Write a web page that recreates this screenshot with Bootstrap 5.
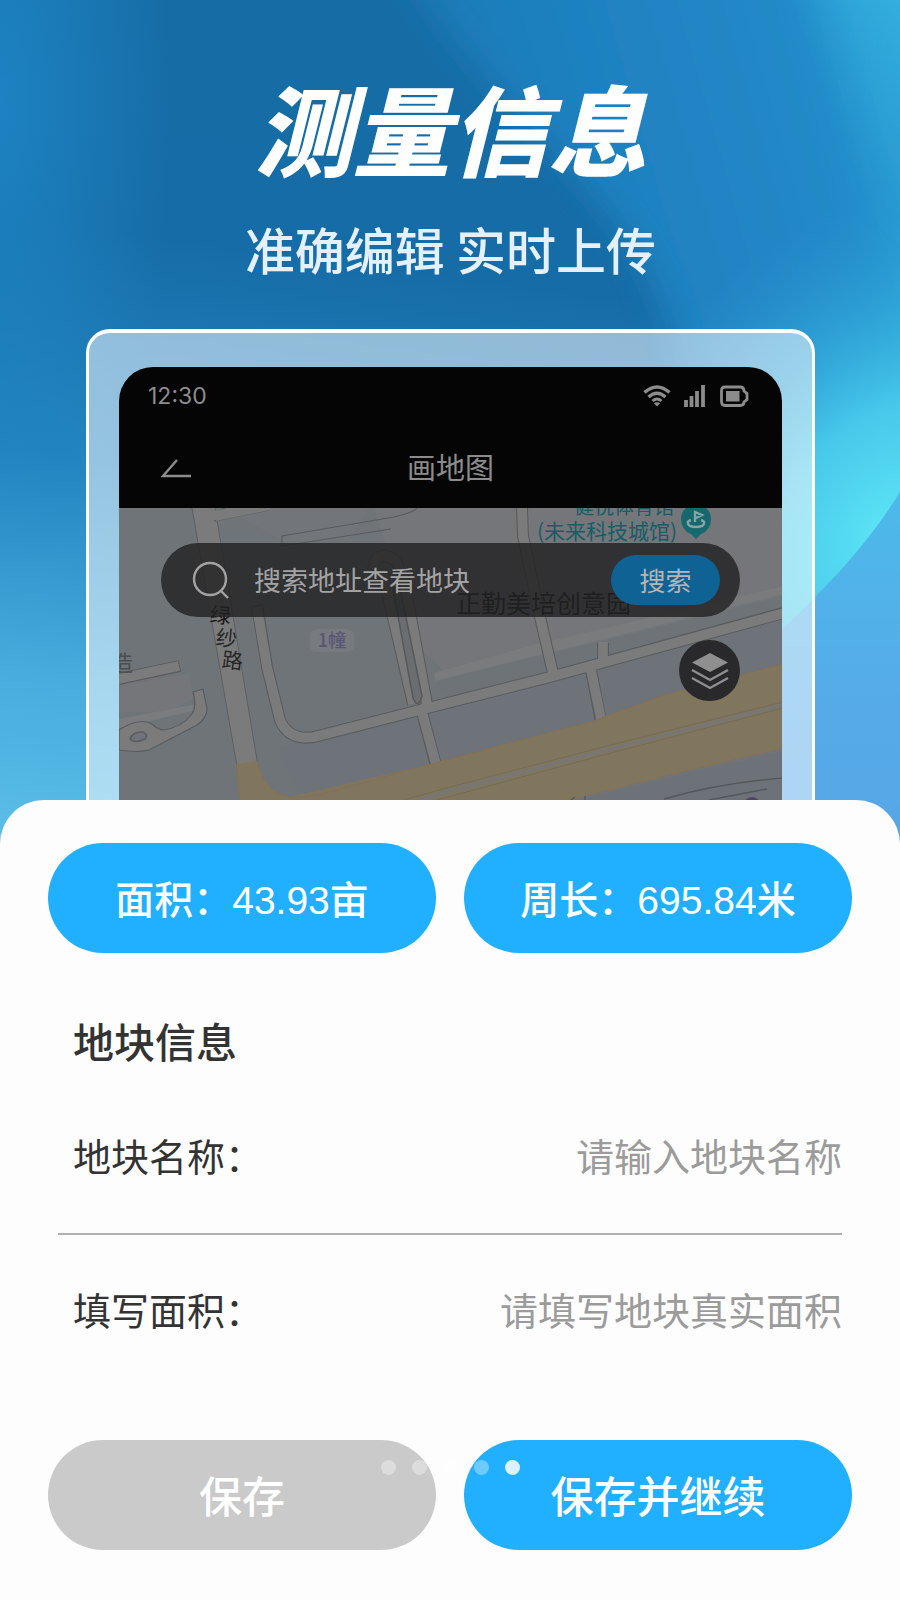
<!DOCTYPE html>
<html lang="zh-CN">
<head>
<meta charset="utf-8">
<meta name="viewport" content="width=device-width, initial-scale=1">
<title>测量信息</title>
<link href="https://cdn.jsdelivr.net/npm/bootstrap@5.3.0/dist/css/bootstrap.min.css" rel="stylesheet">
<style>
  body { font-family: "Liberation Sans", "Noto Sans CJK SC", sans-serif; background: #fdfdfd; color: #333; }
  .sky { top: 0; left: 0; width: 100%; height: 900px; z-index: 0; }
  .hero { z-index: 1; padding: 70px 85px 0 86px; }
  .hero-title { font-family: "Noto Sans CJK SC", sans-serif; font-size: 98px; line-height: 112px; font-weight: 900; font-style: italic; }
  .hero-sub { font-family: "Noto Sans CJK SC", sans-serif; font-size: 50px; line-height: 64px; font-weight: 500; color: #e4f1fd; margin-top: 34px; }
  .device-frame { margin-top: 49px; padding: 34px 30px 0; border: 3px solid #fff; border-top-width: 4px; border-bottom: 0; border-radius: 24px 24px 0 0; background: rgba(255,255,255,.52); }
  .device { border-radius: 34px 34px 0 0; background: #050505; color: #8c8c8c; }
  .status-bar { height: 58px; padding: 0 31px 0 29px; font-family: Inter, sans-serif; font-size: 23px; }
  .title-bar { height: 83px; padding: 5px 42px 0; font-size: 29px; line-height: 40px; }
  .back-btn { left: 42px; line-height: 1; color: inherit; }
  .map-area { min-height: 292px; padding: 35px 42px 0; background: #707478; }
  .map-art { top: 0; left: 0; }
  .map-art text { font-family: "Noto Sans CJK SC", sans-serif; }
  .search-bar { height: 74px; padding: 0 20px 0 31px; background: rgba(34,34,35,.82); }
  .search-bar input, .search-bar input::placeholder { color: #a3a3a3; opacity: 1; }
  .search-bar input { font-size: 27px; line-height: 40px; min-width: 0; margin-left: 24px; padding: 4px 0 0; outline: 0; }
  .search-btn { width: 109px; height: 50px; padding: 4px 0 0; font-size: 26px; line-height: 40px; background: #0e6294; color: #b5b5b5; }
  .layer-btn { width: 61px; height: 61px; margin-top: 23px; background: #29292b; }
  .sheet { z-index: 2; background: #fdfdfd; border-radius: 44px 44px 0 0; padding: 43px 48px 50px; }
  .pill { height: 110px; padding: 5px 0 0; font-size: 39px; line-height: 56px; font-weight: 500; color: #fff; background: #21b0ff; }
  .pill-action { font-size: 43px; }
  .pill-muted { background: #cacaca; }
  .sheet-form { padding: 0 10px; }
  .section-title { font-size: 41px; line-height: 60px; font-weight: 500; margin: 61px 15px 0; }
  .field-row { height: 156px; font-size: 38px; line-height: 56px; padding-left: 15px; }
  .field-row + .field-row { border-top: 2px solid #b0b0b0; }
  .field-row:first-of-type { height: 150px; margin-top: 9px; }
  .field-row input { min-width: 0; outline: 0; color: #333; }
  .field-row input::placeholder { color: #9b9b9b; opacity: 1; }
  .actions { margin-top: 51px; }
  .pager { top: 20px; left: 0; right: 0; pointer-events: none; }
  .pager i { width: 15px; height: 15px; background: rgba(255,255,255,.35); }
  .pager i.current { background: #ddf2ff; }
</style>
</head>
<body>
<div class="position-relative overflow-hidden min-vh-100 d-flex flex-column">

  <svg class="sky position-absolute" viewBox="0 0 900 900" preserveAspectRatio="none" aria-hidden="true">
    <defs>
      <linearGradient id="gBase" x1="450" y1="0" x2="330" y2="900" gradientUnits="userSpaceOnUse">
        <stop offset="0" stop-color="#166da5"/><stop offset=".3" stop-color="#166ca6"/><stop offset=".55" stop-color="#2284bf"/><stop offset=".8" stop-color="#48acde"/><stop offset="1" stop-color="#5cc0e8"/>
      </linearGradient>
      <radialGradient id="gLeft" cx="0" cy="0" r="1" gradientUnits="userSpaceOnUse" gradientTransform="translate(0 100) scale(170 480)">
        <stop offset="0" stop-color="#1e86c7" stop-opacity=".85"/><stop offset="1" stop-color="#1e86c7" stop-opacity="0"/>
      </radialGradient>
      <linearGradient id="gRight" x1="400" y1="300" x2="900" y2="160" gradientUnits="userSpaceOnUse">
        <stop offset="0" stop-color="#1a72af"/><stop offset=".35" stop-color="#1f7fbd"/><stop offset=".7" stop-color="#2085c5"/><stop offset=".88" stop-color="#218ac8"/><stop offset="1" stop-color="#2a9dd4"/>
      </linearGradient>
      <radialGradient id="gCyan" cx="0" cy="0" r="1" gradientUnits="userSpaceOnUse" gradientTransform="translate(885 530) rotate(-52) scale(400 290)">
        <stop offset="0" stop-color="#5ce4f5"/><stop offset=".35" stop-color="#4bd0ef" stop-opacity=".9"/><stop offset=".65" stop-color="#38b6e2" stop-opacity=".5"/><stop offset="1" stop-color="#2a9bd6" stop-opacity="0"/>
      </radialGradient>
      <linearGradient id="gCorner" x1="810" y1="60" x2="920" y2="20" gradientUnits="userSpaceOnUse">
        <stop offset="0" stop-color="#36b4e0" stop-opacity="0"/><stop offset="1" stop-color="#36b4e0" stop-opacity=".85"/>
      </linearGradient>
      <linearGradient id="gFade" x1="0" y1="0" x2="0" y2="1"><stop offset="0" stop-color="#fff"/><stop offset="1" stop-color="#000"/></linearGradient>
      <mask id="mCorner"><rect x="780" width="120" height="260" fill="url(#gFade)"/></mask>
      <linearGradient id="gLow" x1="0" y1="0" x2="0" y2="1">
        <stop offset="0" stop-color="#4cbaea"/><stop offset=".5" stop-color="#55abe8"/><stop offset="1" stop-color="#57a4e5"/>
      </linearGradient>
      <filter id="soft" x="-20%" y="-20%" width="140%" height="140%"><feGaussianBlur stdDeviation="16"/></filter>
    </defs>
    <rect width="900" height="900" fill="url(#gBase)"/>
    <rect width="200" height="640" fill="url(#gLeft)"/>
    <path d="M390 -60C450 60 560 150 610 215C650 265 665 310 680 366L720 640L980 640L980 -60Z" fill="url(#gRight)" filter="url(#soft)"/>
    <rect x="500" width="400" height="900" fill="url(#gCyan)"/>
    <rect x="780" width="120" height="260" fill="url(#gCorner)" mask="url(#mCorner)"/>
    <path d="M900 492C870 540 840 572 815 597C800 613 790 622 770 640L640 730L640 900L900 900Z" fill="url(#gLow)"/>
  </svg>

  <header class="hero position-relative text-center text-white">
    <h1 class="hero-title mb-0">测量信息</h1>
    <p class="hero-sub mb-0">准确编辑 实时上传</p>

    <div class="device-frame">
      <div class="device overflow-hidden">
        <div class="status-bar d-flex align-items-center justify-content-between">
          <span>12:30</span>
          <span class="d-flex align-items-center">
            <svg width="108" height="26" viewBox="0 0 108 26" fill="none" stroke="#8c8c8c" aria-hidden="true">
              <path d="M1.500 9.500Q14 -1.500 26.500 9.500" stroke-width="3.600"/>
              <path d="M5.500 14Q14 6.500 22.500 14" stroke-width="3.400"/>
              <path d="M9.500 18Q14 14 18.500 18" stroke-width="3"/>
              <path d="M14 23.500L10.800 20.300Q14 18 17.200 20.300Z" fill="#8c8c8c" stroke="none"/>
              <path d="M43 24V17M48.500 24V13M54 24V8M60 24V2" stroke-width="3.800"/>
              <path d="M82 4H97Q101 4 101 8L104 10.500V16.500L101 19Q101 22.500 97 22.500H82Q78.500 22.500 78.500 18.500V8Q78.500 4 82 4Z" stroke-width="2.800"/>
              <rect x="83" y="8" width="13.500" height="10.500" fill="#8c8c8c" stroke="none"/>
            </svg>
          </span>
        </div>
        <div class="title-bar position-relative d-flex align-items-center justify-content-center">
          <button type="button" class="back-btn btn p-0 border-0 position-absolute" aria-label="返回">
            <svg width="30" height="20" viewBox="0 0 30 20" fill="none" stroke="#8c8c8c" stroke-width="2.400"><path d="M16 1L2 17H30"/></svg>
          </button>
          <span>画地图</span>
        </div>

        <div class="map-area position-relative overflow-hidden">
          <svg class="map-art position-absolute w-100 h-100" viewBox="0 0 663 292" preserveAspectRatio="xMidYMin slice" role="img" aria-label="地图">
            <rect width="664" height="292" fill="#6f7478"/>
            <path d="M230 0H664V92L331 168L300 140L255 0Z" fill="#747679"/>
            <path d="M105 0H250L230 32L165 34Z" fill="#727579"/>
            <path d="M315 165L410 138L664 78V86L316 173Z" fill="#7a7b7d"/>
            <path d="M317 174L664 88V98L331 190Z" fill="#6e7378"/>
            <path d="M0 178L70 165L75 190L50 204H0Z" fill="#747679"/>
            <path d="M0 211L78 196V202L0 220Z" fill="#7a7c7d"/>
            <path d="M160 240L664 110V190L500 240L180 290Z" fill="#6e7279"/>
            <!-- trunk road -->
            <path d="M73 0L119 264H140L96 0Z" fill="#7b7b7b"/>
            <path d="M73 0L119 264M96 0L140 264" stroke="#5d6062" fill="none"/>
            <path d="M95 13L150 2M100 3L106 0" stroke="#5d6062" stroke-width="1.500" fill="none"/>
            <path d="M96 8L150 -3" stroke="#7a7b7b" stroke-width="10"/>
            <!-- streets: casing first, surface above -->
            <g fill="none" stroke-linejoin="round">
              <g stroke="#595c5e" stroke-width="12">
                <path d="M138 97L148 159L161 212Q170 233 195 229L285 206L431 169L664 105"/>
                <path d="M263 62L294 196M283 60L308 196L303 204L317 258"/>
                <path d="M254 62Q256 47 266 48Q277 49 280 60"/>
                <path d="M403 0L404 28L421 109L434 165M484 135V158M472 162L482 214"/>
                <path d="M0 171L61 158"/>
              </g>
              <g stroke="#7b7b7b" stroke-width="9.800">
                <path d="M138 99L148 159L161 212Q170 233 195 229L285 206L431 169L665 105"/>
                <path d="M263 62L294 196M283 60L308 196L303 204L318 260"/>
                <path d="M254 62Q256 47 266 48Q277 49 280 60"/>
                <path d="M403 -1L404 28L421 109L434 165M484 134V158M472 162L483 216"/>
                <path d="M-1 171L60 158"/>
              </g>
              <path d="M163 38V28L275 9Q294 5 298 0M163 38L272 21" stroke="#595c5e" stroke-width="1.200"/>
              <path d="M273 75L294 190Q299 202 303 188L280 75" fill="#6b6e70" stroke="#56595b" stroke-width="1.500"/>
              <path d="M0 222Q22 208 34 217Q40 222 44 222Q62 220 73 206Q78 198 74 184L84 181L88 201Q88 210 78 217L30 242Q18 245 0 242Z" fill="#7b7b7b" stroke="#595c5e" stroke-width="1.200"/>
              <path d="M11 231Q14 223 24 224Q30 227 26 231Q16 236 11 231Z" stroke="#595c5e" stroke-width="1.500" fill="#707478"/>
            </g>
            <!-- expressway -->
            <path d="M117 256L138 253Q145 284 170 289L312 256L474 213L545 187L664 156V240L538 270L450 292H121Z" fill="#80765d"/>
            <path d="M117 256L121 292M138 253Q145 284 170 289Q180 290 200 287L312 256L474 213L545 187L664 156M664 240L538 270L450 292" fill="none" stroke="#85705a"/>
            <path d="M300 292L331 283L488 242L664 197" fill="none" stroke="#797671" stroke-width="4"/>
            <path d="M285 292L331 279L488 238L664 194M318 292L488 246L664 200" fill="none" stroke="#756a56"/>
            <path d="M460 292L664 243V292Z" fill="#6d7278"/>
            <path d="M545 291Q600 275 664 270M590 292L648 281M452 292L456 289M466 288V292" fill="none" stroke="#55585b" stroke-width="1.400"/>
            <circle cx="633" cy="298" r="9" fill="#4b455f"/>
            <!-- labels -->
            <g fill="#252627" font-size="21">
              <text x="91" y="115" transform="rotate(6 102 107)" fill="#151515">绿</text>
              <text x="97" y="138" transform="rotate(6 108 130)">纱</text>
              <text x="103" y="160" transform="rotate(6 113 152)">路</text>
            </g>
            <text x="-8" y="163" font-size="22" fill="#4c4e50">造</text>
            <rect x="191" y="121" width="44" height="23" rx="6" fill="#777a7f"/>
            <text x="213" y="139" font-size="18" font-weight="500" text-anchor="middle" fill="#595575">1幢</text>
            <g fill="#165d66">
              <text x="455" y="6" font-size="20">健悦体育馆</text>
              <text x="418" y="31" font-size="21">(未来科技城馆)</text>
            </g>
            <path d="M577 31L572 26Q562 22 562 11A15 15 0 0 1 592 11Q592 22 582 26Z" fill="#14686e"/>
            <path d="M576 14V4L583 7L577 10M572 12Q566 14 571 18Q577 20 583 18Q588 14 582 12" fill="none" stroke="#86a3a5" stroke-width="2.400"/>
            <text x="337" y="105" font-size="25" fill="#111">正勤美培创意园</text>
          </svg>

          <form class="search-bar position-relative d-flex align-items-center rounded-pill">
            <svg class="flex-shrink-0" width="38" height="38" viewBox="0 0 38 38" fill="none" stroke="#a3a3a3" stroke-width="2.400" aria-hidden="true"><circle cx="18" cy="18" r="16"/><path d="M28.500 29.500L36 37"/></svg>
            <input class="flex-grow-1 border-0 bg-transparent" type="text" placeholder="搜索地址查看地块" aria-label="搜索地址查看地块">
            <button type="button" class="search-btn btn rounded-pill border-0 flex-shrink-0">搜索</button>
          </form>
          <div class="position-relative d-flex justify-content-end">
            <button type="button" class="layer-btn btn rounded-circle border-0 p-0 d-flex align-items-center justify-content-center" aria-label="图层">
              <svg width="38" height="38" viewBox="0 0 38 38" fill="none" stroke="#8f8f8f" stroke-width="2.400"><path d="M19 1L37 10.500L19 20L1 10.500Z" fill="#8f8f8f" stroke="none"/><path d="M1 18L19 28L37 18M1 26L19 36L37 26"/></svg>
            </button>
          </div>
        </div>
      </div>
    </div>
  </header>

  <main class="sheet position-relative flex-grow-1">
    <div class="row text-center" style="--bs-gutter-x:28px">
      <div class="col-6"><div class="pill rounded-pill d-flex align-items-center justify-content-center">面积：43.93亩</div></div>
      <div class="col-6"><div class="pill rounded-pill d-flex align-items-center justify-content-center">周长：695.84米</div></div>
    </div>

    <form>
      <div class="sheet-form">
        <h2 class="section-title mb-0">地块信息</h2>
        <div class="field-row d-flex align-items-center">
          <label class="flex-shrink-0" for="plotName">地块名称：</label>
          <input id="plotName" type="text" class="flex-grow-1 border-0 bg-transparent p-0 text-end" placeholder="请输入地块名称">
        </div>
        <div class="field-row d-flex align-items-center">
          <label class="flex-shrink-0" for="plotArea">填写面积：</label>
          <input id="plotArea" type="text" class="flex-grow-1 border-0 bg-transparent p-0 text-end" placeholder="请填写地块真实面积">
        </div>
      </div>
      <div class="actions position-relative">
        <div class="row" style="--bs-gutter-x:28px">
          <div class="col-6"><button type="button" class="pill pill-action pill-muted btn border-0 rounded-pill w-100">保存</button></div>
          <div class="col-6"><button type="submit" class="pill pill-action btn border-0 rounded-pill w-100">保存并继续</button></div>
        </div>
        <div class="pager position-absolute d-flex justify-content-center gap-3" aria-hidden="true">
          <i class="rounded-circle"></i><i class="rounded-circle"></i><i class="rounded-circle"></i><i class="rounded-circle"></i><i class="rounded-circle current"></i>
        </div>
      </div>
    </form>
  </main>
</div>
<script src="https://cdn.jsdelivr.net/npm/bootstrap@5.3.0/dist/js/bootstrap.bundle.min.js"></script>
</body>
</html>
